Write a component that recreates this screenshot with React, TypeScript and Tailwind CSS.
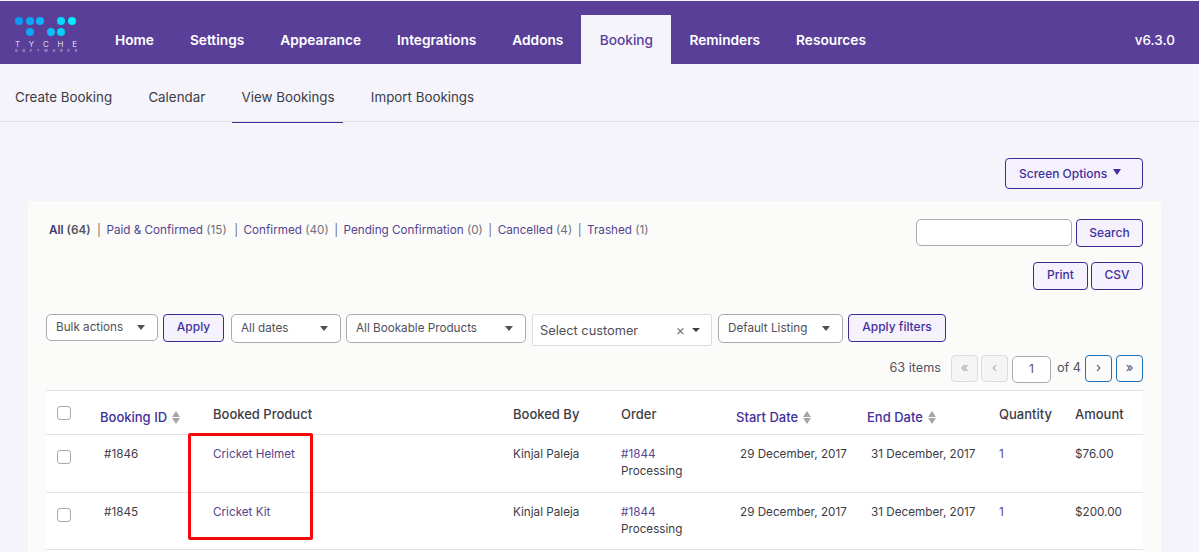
import React from "react";

const nav = ["Home", "Settings", "Appearance", "Integrations", "Addons", "Booking", "Reminders", "Resources"];
const sub = ["Create Booking", "Calendar", "View Bookings", "Import Bookings"];
const grid = "grid grid-cols-[54px_113px_300px_108px_115px_131px_132px_76px_1fr]";

function Logo() {
  const dots: [number, number, string][] = [
    [4, 4, "#0b9bf6"], [15, 4, "#0aa6f8"], [25, 4, "#08b4fa"], [46, 4, "#03dcfd"], [57, 4, "#00f0ff"],
    [15, 15, "#0aa6f8"], [36, 15, "#07c0fb"], [46, 15, "#05d0fc"],
  ];
  return (
    <div className="w-[64px] ml-[15px] mt-[16px] flex flex-col text-white">
      <svg width="63" height="21" viewBox="0 0 63 21" className="block">
        {dots.map(([x, y, c], i) => <circle key={i} cx={x} cy={y} r="4" fill={c} />)}
      </svg>
      <div className="text-[8px] font-light leading-[9px] mt-[2px] flex justify-between w-[62px]">
        {"TYCHE".split("").map((c, i) => <span key={i}>{c}</span>)}
      </div>
      <div className="text-[3.5px] leading-[5px] flex justify-between w-[62px] opacity-80">
        {"SOFTWARES".split("").map((c, i) => <span key={i}>{c}</span>)}
      </div>
    </div>
  );
}

function Caret() {
  return <span className="w-0 h-0 border-x-[4.5px] border-x-transparent border-t-[5px] border-t-[#50505a]" />;
}

function SelectBox({ w, label, h = "h-[27px]", down }: { w: string; label: string; h?: string; down?: boolean }) {
  return (
    <div className={`${w} ${h} bg-white border border-[#a9a9ae] rounded-[5px] flex items-center justify-between pl-[9px] pr-[12px] text-[11.7px] text-[#50505a]`}>
      <span className={down ? "mt-[1px]" : ""}>{label}</span>
      <Caret />
    </div>
  );
}

function Btn({ children, className = "" }: { children: React.ReactNode; className?: string }) {
  return (
    <button className={`bg-[#f5f1fd] border border-[#3f2a94] rounded-[4px] text-[12px] font-medium text-[#43309a] flex items-center justify-center ${className}`}>
      {children}
    </button>
  );
}

function Sort() {
  return (
    <span className="inline-flex flex-col gap-[1px] ml-[5px]">
      <span className="w-0 h-0 border-x-[4px] border-x-transparent border-b-[6px] border-b-[#a5a5ac]" />
      <span className="w-0 h-0 border-x-[4px] border-x-transparent border-t-[6px] border-t-[#a5a5ac]" />
    </span>
  );
}

function Check() {
  return <span className="block w-[14px] h-[14px] bg-white border border-[#a9a9ae] rounded-[3px]" />;
}

function Row({ id, product, start, end, amount, h }: { id: string; product: string; start: string; end: string; amount: string; h: string }) {
  return (
    <div className={`${grid} ${h} border-b border-[#e2e2e8] text-[11.7px] leading-[17px] text-[#3c3c46]`}>
      <div className="pl-[11px] pt-[15px]"><Check /></div>
      <div className="pl-[4px] pt-[11px]">{id}</div>
      <div className="pt-[11px] text-[#55458f]">{product}</div>
      <div className="pt-[11px]">Kinjal Paleja</div>
      <div className="pt-[11px]">
        <div className="text-[#55458f]">#1844</div>
        <div>Processing</div>
      </div>
      <div className="pl-[4px] pt-[11px]">{start}</div>
      <div className="pl-[4px] pt-[11px]">{end}</div>
      <div className="pt-[11px] text-[#55458f]">1</div>
      <div className="pt-[11px]">{amount}</div>
    </div>
  );
}

function PageBtn({ children, on, className = "" }: { children: React.ReactNode; on?: boolean; className?: string }) {
  return (
    <span className={`w-[27px] h-[27px] rounded-[4px] border flex items-center justify-center text-[13px] ${on ? "bg-[#fbfbfc] border-[#2271b1] text-[#3f4a7a]" : "bg-[#f5f5f5] border-[#dcdcde] text-[#a7aaad]"} ${className}`}>
      {children}
    </span>
  );
}

function Sep() {
  return <span className="text-[#70707a]">|</span>;
}

export default function App() {
  return (
    <div className="relative w-[1199px] h-[552px] overflow-hidden bg-[#f5f4fb] font-['Inter',sans-serif]">
      <div className="h-[1px] bg-[#f5f4fb]" />
      <header className="h-[63px] bg-[#5a3f99] flex items-start">
        <Logo />
        <nav className="flex h-full ml-[18px]">
          {nav.map((n) => n === "Booking" ? (
            <div key={n} className="mt-[14px] h-[49px] pt-[2px] w-[90px] bg-[#f5f4fb] flex items-center justify-center text-[13.7px] font-medium text-[#5a3f99]">{n}</div>
          ) : (
            <div key={n} className="mt-[14px] h-[49px] pt-[2px] px-[18px] flex items-center text-[13.7px] font-semibold text-white">{n}</div>
          ))}
        </nav>
        <div className="ml-auto mr-[24px] mt-[14px] h-[49px] pt-[2px] flex items-center text-[13.5px] font-medium text-white">v6.3.0</div>
      </header>

      <div className="h-[58px] border-b border-[#dddde3] flex pl-[5px]">
        {sub.map((s) => (
          <div key={s} className={`h-[59px] pl-[10px] pr-[8px] mr-[18.3px] pt-[9px] flex items-center border-b text-[13.35px] text-[#3c3c46] ${s === "View Bookings" ? "border-[#43309a]" : "border-transparent"}`}>{s}</div>
        ))}
      </div>

      <div className="h-[79px] flex justify-end items-start pr-[56px] pt-[36px]">
        <Btn className="w-[138px] h-[31px] !justify-start pl-[13px] gap-[6px]">
          Screen Options
          <span className="w-0 h-0 mb-[3px] border-x-[4px] border-x-transparent border-t-[6px] border-t-[#43309a]" />
        </Btn>
      </div>

      <main className="ml-[28px] w-[1133px] h-[351px] bg-[#fbfbf9] px-[18px] flex flex-col">
        <div className="flex justify-between items-start h-[61px] pt-[18px]">
          <div className="text-[11.7px] leading-[21px] pl-[3px] pt-[1px] text-[#55458f] flex gap-[5.5px]">
            <span className="font-semibold text-[#3f3a70] mr-[1px]">All <span className="text-[#55555f]">(64)</span></span>
            <Sep />
            <span className="mr-[2px]">Paid &amp; Confirmed <span className="text-[#70707a]">(15)</span></span>
            <Sep />
            <span>Confirmed <span className="text-[#70707a]">(40)</span></span>
            <Sep />
            <span>Pending Confirmation <span className="text-[#70707a]">(0)</span></span>
            <Sep />
            <span>Cancelled <span className="text-[#70707a]">(4)</span></span>
            <Sep />
            <span>Trashed <span className="text-[#70707a]">(1)</span></span>
          </div>
          <div className="flex flex-col items-end">
            <div className="flex gap-[4px]">
              <div className="w-[156px] h-[27px] bg-white border border-[#a9a9ae] rounded-[5px]" />
              <Btn className="w-[67px] h-[28px]">Search</Btn>
            </div>
            <div className="flex gap-[3px] mt-[15px]">
              <Btn className="w-[55px] h-[28px] pb-[2px]">Print</Btn>
              <Btn className="w-[52px] h-[28px] pb-[2px]">CSV</Btn>
            </div>
          </div>
        </div>

        <div className="flex items-start gap-[5px] mt-[52px]">
          <SelectBox w="w-[112px]" label="Bulk actions" />
          <Btn className="w-[61px] h-[28px] pb-[2px]">Apply</Btn>
          <div className="ml-[2px]"><SelectBox w="w-[110px]" label="All dates" h="h-[29px]" down /></div>
          <SelectBox w="w-[180px]" label="All Bookable Products" h="h-[29px]" down />
          <div className="ml-[1px] w-[180px] h-[32px] bg-white border border-[#dedee2] rounded-[2px] flex items-center pl-[7px] pr-[11px] text-[12.8px] text-[#50505a]">
            <span className="mt-[1px]">Select customer</span>
            <span className="ml-auto text-[14px] leading-none text-[#707078] mr-[7px]">×</span>
            <span className="w-0 h-0 border-x-[4px] border-x-transparent border-t-[4px] border-t-[#40404a]" />
          </div>
          <div className="ml-[1px]"><SelectBox w="w-[125px]" label="Default Listing" h="h-[29px]" down /></div>
          <Btn className="w-[98px] h-[28px] pb-[2px]">Apply filters</Btn>
        </div>

        <div className="flex justify-end items-center mt-[8px] h-[28px] text-[12.7px] text-[#55555f]">
          <span className="mr-[10px]">63 items</span>
          <PageBtn>«</PageBtn>
          <PageBtn className="ml-[3px]">‹</PageBtn>
          <span className="ml-[4px] w-[39px] h-[27px] mt-[2px] bg-white border border-[#a9a9ae] rounded-[5px] flex items-center justify-center text-[12px]">1</span>
          <span className="ml-[6px] w-[23px] whitespace-nowrap">of 4</span>
          <PageBtn on className="ml-[5px]">›</PageBtn>
          <PageBtn on className="ml-[4px]">»</PageBtn>
        </div>

        <section className="mt-[8px] bg-white border-t border-[#e2e2e8] flex-1">
          <div className={`${grid} h-[44px] border-b border-[#e2e2e8] text-[13px] font-medium text-[#3c3c46]`}>
            <div className="pl-[11px] pt-[15px]"><Check /></div>
            <div className="pt-[17px] text-[#43309a] flex items-start">Booking ID<span className="flex mt-[3px]"><Sort /></span></div>
            <div className="pt-[14px]">Booked Product</div>
            <div className="pt-[14px]">Booked By</div>
            <div className="pt-[14px]">Order</div>
            <div className="pt-[17px] text-[#43309a] flex items-start">Start Date<span className="flex mt-[3px]"><Sort /></span></div>
            <div className="pt-[17px] text-[#43309a] flex items-start">End Date<span className="flex mt-[3px]"><Sort /></span></div>
            <div className="pt-[14px]">Quantity</div>
            <div className="pt-[14px]">Amount</div>
          </div>
          <Row id="#1846" product="Cricket Helmet" start="29 December, 2017" end="31 December, 2017" amount="$76.00" h="h-[58px]" />
          <Row id="#1845" product="Cricket Kit" start="29 December, 2017" end="31 December, 2017" amount="$200.00" h="h-[57px]" />
        </section>
      </main>

      <div className="absolute left-[188px] top-[433px] w-[125px] h-[107px] border-[3px] border-[#f50a0a] rounded-[2px]" />
    </div>
  );
}
